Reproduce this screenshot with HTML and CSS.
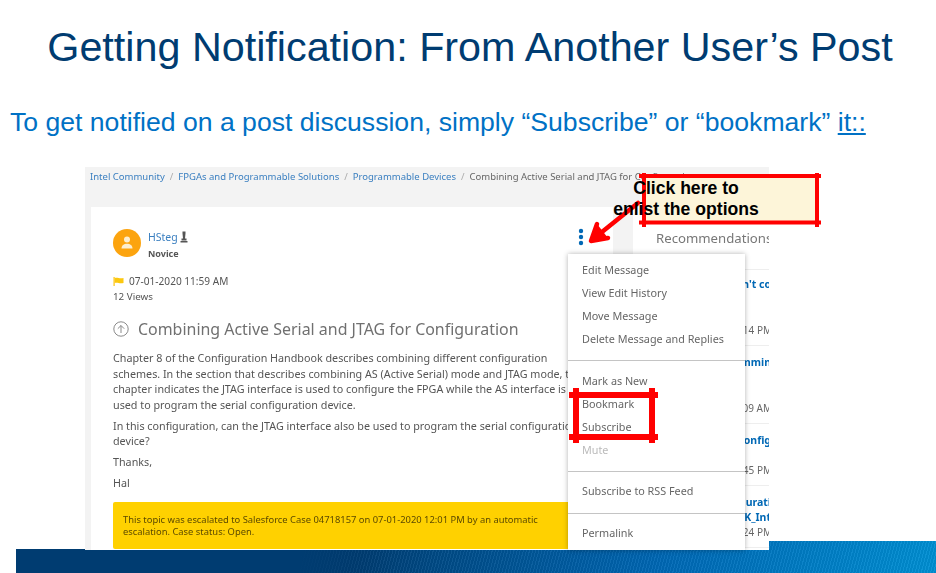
FILE: index.html
```html
<!DOCTYPE html>
<html lang="en">
<head>
<meta charset="utf-8">
<title>Getting Notification</title>
<link rel="stylesheet" href="styles.css">
</head>
<body>
<div class="slide">
  <h1 class="title">Getting Notification: From Another User’s Post</h1>
  <p class="lead">To get notified on a post discussion, simply “Subscribe” or “bookmark” <u>it::</u></p>

  <div class="shot">
    <nav class="crumbs">
      <a>Intel Community</a><i>/</i><a>FPGAs and Programmable Solutions</a><i>/</i><a>Programmable Devices</a><i>/</i><span>Combining Active Serial and JTAG for Configuration</span>
    </nav>
    <div class="columns">
      <article class="post">
        <header class="author">
          <div class="avatar">
            <svg viewBox="0 0 28 28" width="28" height="28"><circle cx="14" cy="14" r="14" fill="#fca40f"/><circle cx="14" cy="10.5" r="3" fill="#fdeed0"/><path d="M8.5 19.5c0-3.2 2.4-4.8 5.5-4.8s5.500 1.600 5.500 4.800z" fill="#fdeed0"/></svg>
          </div>
          <div class="who">
            <div class="name">HSteg <svg class="rank" viewBox="0 0 8 12" width="8" height="12"><path d="M2.500 0.500h3v2l-0.500 5h1.500v2h-5v-2h1.500l-0.500-5z" fill="#555"/><rect x="0.500" y="10" width="7" height="1.500" fill="#555"/></svg></div>
            <div class="rank-name">Novice</div>
          </div>
        </header>
        <div class="date">
          <svg viewBox="0 0 11 9" width="11" height="9"><path d="M0.500 0h1.200v9H0.500z" fill="#fcc30f"/><path d="M1.700 1c3-1 4.500 1 8.800 0v5c-4.300 1-5.800-1-8.800 0z" fill="#fcc80f"/></svg>
          <span>07-01-2020 11:59 AM</span>
        </div>
        <div class="views">12 Views</div>
        <h2 class="subject">
          <svg viewBox="0 0 16 16" width="16" height="16"><circle cx="8" cy="8" r="7.200" fill="none" stroke="#8a8a8a" stroke-width="1"/><path d="M8 12V4.500M4.800 7.700L8 4.500l3.200 3.200" fill="none" stroke="#8a8a8a" stroke-width="1"/></svg>
          <span>Combining Active Serial and JTAG for Configuration</span>
        </h2>
        <div class="body">
          <p>Chapter 8 of the Configuration Handbook describes combining different configuration schemes. In the section that describes combining AS (Active Serial) mode and JTAG mode, the chapter indicates the JTAG interface is used to configure the FPGA while the AS interface is used to program the serial configuration device.</p>
          <p>In this configuration, can the JTAG interface also be used to program the serial configuration device?</p>
          <p>Thanks,</p>
          <p>Hal</p>
        </div>
        <div class="notice">This topic was escalated to Salesforce Case 04718157 on 07-01-2020 12:01 PM by an automatic escalation. Case status: Open.</div>
      </article>
      <aside class="side">
        <h3 class="side-title">Recommendations</h3>
        <section class="rec rec-a"><b>Can't co</b><time>11:14 PM</time></section>
        <section class="rec rec-b"><b>Programmin</b><time>10:09 AM</time></section>
        <section class="rec rec-c"><b>Config</b><time>11:45 PM</time></section>
        <section class="rec rec-d"><b>Configurati</b><b>K_Int</b><time>11:24 PM</time></section>
      </aside>
    </div>
  </div>

  <footer class="band"></footer>
</div>

<ul class="menu">
  <li>Edit Message</li>
  <li>View Edit History</li>
  <li>Move Message</li>
  <li>Delete Message and Replies</li>
  <li class="sep"></li>
  <li>Mark as New</li>
  <li>Bookmark</li>
  <li>Subscribe</li>
  <li class="off">Mute</li>
  <li class="sep sep-a"></li>
  <li>Subscribe to RSS Feed</li>
  <li class="sep sep-b"></li>
  <li>Permalink</li>
</ul>

<svg class="marks" viewBox="0 0 936 573" width="936" height="573">
  <g fill="#0068b5"><circle cx="581" cy="231" r="2.200"/><circle cx="581" cy="237" r="2.200"/><circle cx="581" cy="243" r="2.200"/></g>
  <rect x="643" y="177" width="175" height="45" fill="#fdf5d9"/>
  <g stroke="#ff0000" stroke-width="4" fill="none" stroke-linecap="square">
    <path d="M641 176H819M644 175V225M817 175V225M641 222.500H819" />
  </g>
  <g stroke="#ff0000" stroke-width="4.500" fill="none" stroke-linecap="round" stroke-linejoin="round">
    <path d="M638 203L592 240M597 224L591 241L608 238"/>
  </g>
  <path d="M597 224L591 241L608 238z" fill="#ff0000"/>
  <g stroke="#ff0000" stroke-width="6" fill="none">
    <path d="M569 395H658M569 437H658M576 388V443M652 388V443"/>
  </g>
</svg>
<div class="callout">Click here to<br>enlist the options</div>
</body>
</html>
```
FILE: styles.css
```css
* { box-sizing: border-box; }
html, body { margin: 0; padding: 0; }
body {
  width: 936px;
  height: 573px;
  overflow: hidden;
  position: relative;
  background: #fff;
  font-family: "Liberation Sans", Arial, sans-serif;
}
.slide { display: flex; flex-direction: column; width: 936px; height: 573px; }
.title {
  margin: 0;
  padding: 23px 0 0 4px;
  height: 95px;
  font-weight: 400;
  font-size: 41.300px;
  line-height: 48px;
  text-align: center;
  color: #003c71;
}
.lead {
  margin: 0;
  padding-left: 10px;
  height: 72px;
  font-size: 26.600px;
  line-height: 54px;
  color: #0071c5;
  white-space: nowrap;
}
.lead u { color: #0071c5; }

.shot {
  position: relative;
  z-index: 1;
  flex: none;
  margin-left: 85px;
  width: 684px;
  height: 383px;
  margin-top: 0;
  overflow: hidden;
  background: #f3f3f3;
  font-family: "Noto Sans", sans-serif;
  color: #555;
  filter: blur(0.35px);
}
.crumbs {
  display: flex;
  align-items: flex-start;
  height: 40px;
  padding: 3px 0 0 5px;
  font-size: 9.500px;
  line-height: 14px;
  white-space: nowrap;
  color: #666;
}
.crumbs a { color: #3a7fc0; }
.crumbs i { font-style: normal; margin: 0 5px; color: #aaa; }
.columns { display: flex; gap: 20px; padding-left: 6px; height: 343px; }
.post {
  flex: 0 0 522px;
  background: #fff;
  padding: 22px 22px 0;
  height: 343px;
}
.author { display: flex; gap: 7px; height: 29px; }
.avatar { width: 28px; height: 28px; }
.name { font-size: 10.500px; line-height: 13px; margin-top: 2px; color: #3a7fc0; }
.rank { vertical-align: -2px; }
.rank-name { font-size: 9px; line-height: 13px; margin-top: 3px; font-weight: 700; color: #555; }
.date { display: flex; align-items: center; gap: 5px; margin-top: 15px; font-size: 10.100px; line-height: 16px; }
.views { font-size: 9.800px; line-height: 16px; }
.subject {
  display: flex;
  align-items: center;
  gap: 9px;
  margin: 13px 0 0;
  height: 22px;
  font-weight: 400;
  font-size: 15.950px;
  color: #707070;
  white-space: nowrap;
}
.body { margin-top: 11px; font-size: 10.750px; line-height: 15.600px; color: #555; }
.body p { margin: 0 0 5.200px; }
.notice {
  margin-top: 11px;
  height: 47px;
  padding: 12px 10px 0;
  border-radius: 2px;
  background: #ffd100;
  font-size: 9.400px;
  line-height: 12px;
  color: #5c4a00;
}
.side {
  flex: 0 0 136px;
  background: #fff;
  height: 343px;
  overflow: hidden;
}
.side-title {
  margin: 0;
  padding: 22px 0 0 23px;
  height: 63px;
  font-weight: 400;
  font-size: 13.200px;
  line-height: 18px;
  color: #777;
  white-space: nowrap;
  overflow: hidden;
  border-bottom: 1px solid #eee;
}
.rec {
  display: flex;
  flex-direction: column;
  align-items: flex-end;
  border-bottom: 1px solid #eee;
  font-size: 10.500px;
  line-height: 15px;
}
.rec b { color: #0068b5; font-weight: 700; margin-right: -2px; }
.rec time { color: #666; margin-right: -3px; margin-top: auto; padding-bottom: 7px; font-size: 10px; }
.rec-a { height: 76px; padding-top: 7px; }
.rec-b { height: 78px; padding-top: 9px; }
.rec-c { height: 62px; padding-top: 9px; }
.rec-d { height: 62px; padding-top: 9px; }

.band {
  flex: none;
  margin-left: 16px;
  margin-top: -9px;
  width: 920px;
  height: 32px;
  clip-path: polygon(0 8px, 753px 8px, 753px 0, 920px 0, 920px 32px, 0 32px);
  background:
    linear-gradient(100deg, #003c71 0 31%, rgba(0,60,113,0) 40%),
    repeating-linear-gradient(105deg, rgba(255,255,255,0.05) 0 1px, rgba(0,0,0,0.05) 1px 3px),
    linear-gradient(100deg, #003c71 0 37%, #004a85 45%, #0068b5 70%, #0090d4 100%);
}

.menu {
  position: absolute;
  z-index: 2;
  left: 568px;
  top: 254px;
  width: 177px;
  height: 296px;
  margin: 0;
  padding: 4px 0 0 14px;
  list-style: none;
  background: #fff;
  box-shadow: 0 0 5px rgba(0,0,0,0.3);
  font-family: "Noto Sans", sans-serif;
  font-size: 10.800px;
  line-height: 23px;
  color: #666;
  filter: blur(0.35px);
}
.menu .off { color: #bbb; }
.menu .sep {
  height: 1px;
  margin: 9.500px 0 8.500px -14px;
  background: #c4c4c4;
}
.menu .sep-a { margin-bottom: 7.500px; }
.menu .sep-b { margin: 11px 0 7px -14px; }

.marks { position: absolute; z-index: 3; left: 0; top: 0; pointer-events: none; }
.callout {
  position: absolute;
  z-index: 4;
  left: 596px;
  top: 178px;
  width: 180px;
  text-align: center;
  font-size: 17.600px;
  line-height: 21px;
  font-weight: 700;
  color: #000;
  white-space: nowrap;
}
```
